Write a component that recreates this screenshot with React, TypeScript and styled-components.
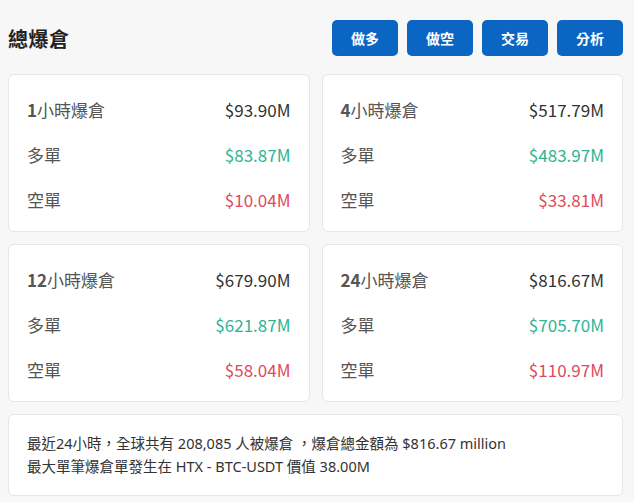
import { createGlobalStyle, styled } from "styled-components";

const GlobalStyle = createGlobalStyle`
  html, body {
    margin: 0;
    padding: 0;
    background: #f7f7f7;
  }
  body {
    font-family: "Noto Sans CJK TC", "Noto Sans", sans-serif;
    color: #333;
  }
`;

type Period = {
  hours: number;
  total: string;
  long: string;
  short: string;
};

const periods: Period[] = [
  { hours: 1, total: "$93.90M", long: "$83.87M", short: "$10.04M" },
  { hours: 4, total: "$517.79M", long: "$483.97M", short: "$33.81M" },
  { hours: 12, total: "$679.90M", long: "$621.87M", short: "$58.04M" },
  { hours: 24, total: "$816.67M", long: "$705.70M", short: "$110.97M" },
];

const actions = ["做多", "做空", "交易", "分析"];

export default function App() {
  return (
    <>
      <GlobalStyle />
      <Page>
        <Header>
          <Title>總爆倉</Title>
          <ButtonRow>
            {actions.map((a) => (
              <ActionButton key={a}>{a}</ActionButton>
            ))}
          </ButtonRow>
        </Header>
        <CardGrid>
          {periods.map((p) => (
            <Card key={p.hours}>
              <Row>
                <Label>
                  <Hours>{p.hours}</Hours>小時爆倉
                </Label>
                <Value>{p.total}</Value>
              </Row>
              <Row>
                <Label>多單</Label>
                <Value $tone="up">{p.long}</Value>
              </Row>
              <Row>
                <Label>空單</Label>
                <Value $tone="down">{p.short}</Value>
              </Row>
            </Card>
          ))}
        </CardGrid>
        <SummaryCard>
          <SummaryLine>
            最近24小時，全球共有 208,085 人被爆倉 ，爆倉總金額為 $816.67 million
          </SummaryLine>
          <SummaryLine>最大單筆爆倉單發生在 HTX - BTC-USDT 價值 38.00M</SummaryLine>
        </SummaryCard>
      </Page>
    </>
  );
}

const Page = styled.div`
  padding: 20px 11px 0 8px;
  display: flex;
  flex-direction: column;
`;

const Header = styled.div`
  display: flex;
  flex-direction: row;
  align-items: center;
  justify-content: space-between;
  height: 36px;
`;

const Title = styled.h1`
  margin: 0;
  font-size: 20px;
  font-weight: 700;
  color: #222;
  letter-spacing: 0.5px;
`;

const ButtonRow = styled.div`
  display: flex;
  flex-direction: row;
  gap: 9px;
`;

const ActionButton = styled.button`
  width: 66px;
  height: 36px;
  border: none;
  border-radius: 5px;
  background-color: #0b66c3;
  color: #fff;
  font-family: inherit;
  font-size: 14px;
  font-weight: 700;
  cursor: pointer;
`;

const CardGrid = styled.div`
  margin-top: 18px;
  display: grid;
  grid-template-columns: 1fr 1fr;
  gap: 12px;
`;

const Card = styled.div`
  background: #fff;
  border: 1px solid #e6e6e6;
  border-radius: 6px;
  height: 158px;
  box-sizing: border-box;
  padding: 12px 18px 0 18px;
  display: flex;
  flex-direction: column;
`;

const Row = styled.div`
  display: flex;
  flex-direction: row;
  align-items: center;
  justify-content: space-between;
  height: 45px;
`;

const Label = styled.div`
  font-size: 17px;
  color: #555;
`;

const Hours = styled.span`
  font-weight: 700;
`;

const Value = styled.div<{ $tone?: "up" | "down" }>`
  font-size: 17px;
  color: ${({ $tone }) =>
    $tone === "up" ? "#2fb493" : $tone === "down" ? "#e04a5c" : "#333"};
`;

const SummaryCard = styled.div`
  margin-top: 12px;
  background: #fff;
  border: 1px solid #e6e6e6;
  border-radius: 6px;
  height: 82px;
  box-sizing: border-box;
  padding: 17px 18px 0 18px;
  display: flex;
  flex-direction: column;
`;

const SummaryLine = styled.div`
  font-family: "Noto Sans", "Noto Sans CJK TC", sans-serif;
  font-size: 14.5px;
  line-height: 23px;
  color: #333;
`;
